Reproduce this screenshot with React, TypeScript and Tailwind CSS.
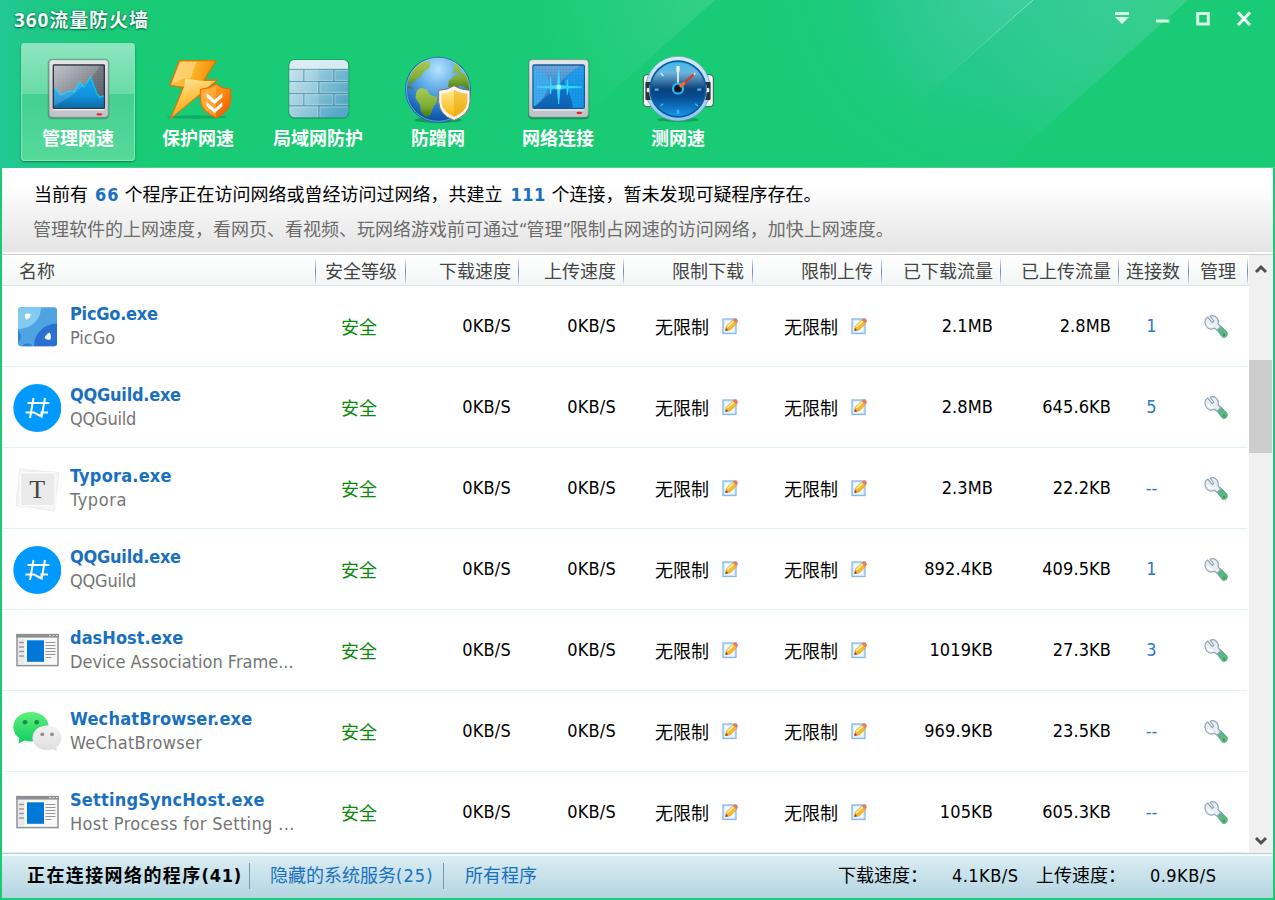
import type { ReactNode } from "react";

function Beams() {
  return (
    <svg className="absolute inset-0" width="1275" height="168" viewBox="0 0 1275 168" aria-hidden="true">
      <defs>
        <linearGradient id="left" x1="0" x2="1" y1="0" y2="0">
          <stop offset="0" stopColor="#22c793" />
          <stop offset="1" stopColor="#18cb74" stopOpacity="0" />
        </linearGradient>
        <radialGradient id="b1" gradientUnits="userSpaceOnUse" cx="715" cy="-10" r="190">
          <stop offset="0" stopColor="#fff" stopOpacity="0.12" />
          <stop offset="1" stopColor="#fff" stopOpacity="0" />
        </radialGradient>
        <radialGradient id="b2" gradientUnits="userSpaceOnUse" cx="1033" cy="-10" r="170">
          <stop offset="0" stopColor="#8be0c8" stopOpacity="0.24" />
          <stop offset="1" stopColor="#8be0c8" stopOpacity="0" />
        </radialGradient>
        <radialGradient id="b3" gradientUnits="userSpaceOnUse" cx="1188" cy="-20" r="240">
          <stop offset="0" stopColor="#fff" stopOpacity="0.13" />
          <stop offset="1" stopColor="#fff" stopOpacity="0" />
        </radialGradient>
        <radialGradient id="teal" gradientUnits="userSpaceOnUse" cx="1000" cy="-30" r="250">
          <stop offset="0" stopColor="#2bc898" />
          <stop offset="0.5" stopColor="#25c88e" stopOpacity="0.75" />
          <stop offset="1" stopColor="#1dca7c" stopOpacity="0" />
        </radialGradient>
        <linearGradient id="edge" gradientUnits="userSpaceOnUse" x1="1033" y1="0" x2="900" y2="118">
          <stop offset="0" stopColor="#b4f0da" stopOpacity="0.6" />
          <stop offset="0.7" stopColor="#b4f0da" stopOpacity="0" />
        </linearGradient>
      </defs>
      <rect width="170" height="168" fill="url(#left)" />
      <path d="M400 0H715L527 168H400Z" fill="url(#b1)" />
      <path d="M700 0H1188L1000 168H700Z" fill="url(#teal)" />
      <path d="M700 0H1033L845 168H700Z" fill="url(#b2)" />
      <path d="M1033 0H1188L1000 168H845Z" fill="url(#b3)" />
      <path d="M1033 0L900 118" stroke="url(#edge)" />
    </svg>
  );
}

function Frame({ children, box }: { children: ReactNode; box: string }) {
  return (
    <svg width="84" height="72" viewBox={box} className="block" aria-hidden="true">
      {children}
    </svg>
  );
}

function MonitorIcon() {
  return (
    <Frame box="108 156 252 216">
      <defs>
        <linearGradient id="mf" x1="0" x2="0" y1="0" y2="1">
          <stop offset="0" stopColor="#e3e6ea" />
          <stop offset="1" stopColor="#bfc2c8" />
        </linearGradient>
        <linearGradient id="ms" x1="0" x2="1" y1="0" y2="1">
          <stop offset="0" stopColor="#b3b7c0" />
          <stop offset="0.5" stopColor="#73787f" />
          <stop offset="1" stopColor="#4d545e" />
        </linearGradient>
        <linearGradient id="mw" x1="0" x2="0" y1="0" y2="1">
          <stop offset="0" stopColor="#12a6ea" />
          <stop offset="0.6" stopColor="#1193de" />
          <stop offset="1" stopColor="#0c69a8" />
        </linearGradient>
        <pattern id="mg" width="8" height="8" patternUnits="userSpaceOnUse">
          <path d="M0 0H8M0 0V8" stroke="#fff" strokeOpacity="0.08" strokeWidth="2" />
        </pattern>
      </defs>
      <rect x="143" y="176" width="185" height="182" rx="13" fill="#24553c" opacity="0.35" />
      <rect x="147" y="179" width="178" height="173" rx="10" fill="url(#mf)" stroke="#6f8b80" strokeWidth="2" />
      <rect x="158" y="193" width="157" height="134" rx="4" fill="#2b3440" />
      <rect x="162" y="197" width="149" height="126" fill="url(#ms)" />
      <rect x="162" y="197" width="149" height="126" fill="url(#mg)" />
      <path d="M162 262L182 285L212 272L222 275L240 245L252 262L272 232L290 280L300 292L311 287V323H162Z" fill="url(#mw)" />
      <path d="M162 262L182 285L212 272L222 275L240 245L252 262L272 232L290 280L300 292L311 287" fill="none" stroke="#16bdf2" strokeWidth="4" />
      <path d="M162 197H300Q255 270 162 318Z" fill="#fff" opacity="0.16" />
      <path d="M160 329H313" stroke="#fff" strokeWidth="3" />
      <ellipse cx="298" cy="343" rx="9" ry="3.5" fill="#ee2222" />
    </Frame>
  );
}

function BoltIcon() {
  return (
    <Frame box="468 156 252 216">
      <defs>
        <linearGradient id="bo" x1="0" x2="1" y1="0" y2="0.3">
          <stop offset="0" stopColor="#ffc24c" />
          <stop offset="0.45" stopColor="#ffb52a" />
          <stop offset="1" stopColor="#f48a00" />
        </linearGradient>
        <linearGradient id="bl" x1="0.3" x2="0.7" y1="0" y2="1">
          <stop offset="0" stopColor="#ffe79a" />
          <stop offset="0.5" stopColor="#ffbf3d" />
          <stop offset="1" stopColor="#f79a12" />
        </linearGradient>
        <linearGradient id="sh" x1="0" x2="1" y1="0" y2="1">
          <stop offset="0" stopColor="#ffad33" />
          <stop offset="0.5" stopColor="#ff8a10" />
          <stop offset="1" stopColor="#e94f00" />
        </linearGradient>
      </defs>
      <ellipse cx="590" cy="351" rx="90" ry="5" fill="#0b7040" opacity="0.35" />
      <path d="M538 182H648L612 240H652L512 355L550 262L510 256Z" fill="url(#bo)" stroke="#d97808" strokeWidth="4" strokeLinejoin="round" />
      <path d="M541 186H590L572 235L550 236L514 253Z" fill="#ffd57c" opacity="0.8" />
      <path d="M556 236L612 243H646L516 350L553 262Z" fill="url(#bl)" />
      <path d="M648 252Q665 266 692 268V300Q692 334 648 354Q602 334 601 300V268Q628 266 648 252Z" fill="url(#sh)" stroke="#e06a10" strokeWidth="3" />
      <path d="M648 258V350Q606 331 606 300V272Q630 270 648 258Z" fill="#ffb648" opacity="0.65" />
      <path d="M620 279L644 300L667 279V292L644 312L620 292ZM620 306L644 327L667 306V319L644 339L620 319Z" fill="#fff" />
    </Frame>
  );
}

function WallIcon() {
  return (
    <Frame box="828 156 252 216">
      <defs>
        <linearGradient id="wa" x1="0" x2="1" y1="0" y2="1">
          <stop offset="0" stopColor="#b9dae6" />
          <stop offset="0.5" stopColor="#83bcd3" />
          <stop offset="1" stopColor="#4c9fc0" />
        </linearGradient>
        <linearGradient id="wb" x1="0" x2="1" y1="0" y2="0.5">
          <stop offset="0" stopColor="#bfe0ea" />
          <stop offset="1" stopColor="#57a8c6" />
        </linearGradient>
        <clipPath id="wc">
          <rect x="868" y="180" width="177" height="172" rx="16" />
        </clipPath>
      </defs>
      <rect x="865" y="178" width="183" height="178" rx="18" fill="#177d55" opacity="0.6" />
      <g clipPath="url(#wc)">
        <rect x="868" y="180" width="177" height="172" fill="url(#wa)" />
        <rect x="868" y="180" width="177" height="27" fill="#d8ebf1" />
        <g fill="url(#wb)" stroke="#c0dfea" strokeWidth="1.5">
          <path d="M866 211H908V241H866ZM915 211H998V241H915ZM1005 211H1047V241H1005ZM866 248H953V277H866ZM960 248H1047V277H960ZM866 284H908V313H866ZM915 284H998V313H915ZM1005 284H1047V313H1005ZM866 321H953V354H866ZM960 321H1047V354H960Z" />
        </g>
        <path d="M868 208H1045M868 244.500H1045M868 280.500H1045M868 317H1045M911.500 208V244M1001.500 208V244M956.500 245V280M911.500 281V316M1001.500 281V316M956.500 317V352" stroke="#4d93ad" strokeWidth="3" />
        <path d="M868 180H956V352H868Z" fill="#fff" opacity="0.12" />
      </g>
    </Frame>
  );
}

function GlobeIcon() {
  return (
    <Frame box="48 156 252 216">
      <defs>
        <radialGradient id="gl" cx="0.5" cy="0.18" r="0.85">
          <stop offset="0" stopColor="#b4e4ff" />
          <stop offset="0.4" stopColor="#5ba9e6" />
          <stop offset="0.8" stopColor="#1a66bb" />
          <stop offset="1" stopColor="#0b4a9a" />
        </radialGradient>
        <linearGradient id="gn" x1="0" x2="0" y1="0" y2="1">
          <stop offset="0" stopColor="#a9c95a" />
          <stop offset="0.6" stopColor="#7fae35" />
          <stop offset="1" stopColor="#3f7a10" />
        </linearGradient>
        <linearGradient id="gy" x1="0" x2="0" y1="0" y2="1">
          <stop offset="0" stopColor="#ffe98a" />
          <stop offset="1" stopColor="#f8b510" />
        </linearGradient>
        <clipPath id="gc">
          <circle cx="174" cy="269" r="96" />
        </clipPath>
      </defs>
      <ellipse cx="174" cy="360" rx="70" ry="9" fill="#0a6238" opacity="0.45" />
      <circle cx="174" cy="269" r="99" fill="#1b67b4" />
      <g clipPath="url(#gc)">
        <circle cx="174" cy="269" r="96" fill="url(#gl)" />
        <path d="M88 230L98 205L126 186L150 184L148 204L132 214L124 228L108 238L96 252L84 246ZM80 256L94 262L100 266L84 264Z" fill="url(#gn)" />
        <path d="M110 272L122 264L140 268L150 284L172 292L170 308L160 320L152 345L138 352L122 334L120 314L106 294Z" fill="url(#gn)" />
        <path d="M218 180L224 200L216 220L230 216L238 226L224 226L206 244L204 260L222 264L244 256L275 272V230L244 188Z" fill="url(#gn)" />
        <path d="M236 204L246 220L262 222L254 206Z" fill="#70b8ec" />
      </g>
      <circle cx="174" cy="269" r="95" fill="none" stroke="#b9e2fb" strokeOpacity="0.5" strokeWidth="3" />
      <path d="M222 257Q242 270 270 271V305Q268 345 222 361Q178 345 176 305V271Q203 270 222 257Z" fill="#f4f4f2" stroke="#85786a" strokeWidth="3" />
      <path d="M222 270Q242 280 262 281V306Q259 336 222 350Q187 336 184 306V281Q204 280 222 270Z" fill="url(#gy)" />
      <path d="M222 270Q242 280 262 281V306Q259 336 222 350Z" fill="#e69c00" opacity="0.4" />
    </Frame>
  );
}

function PulseIcon() {
  return (
    <Frame box="408 156 252 216">
      <defs>
        <linearGradient id="ps" x1="0" x2="0" y1="0" y2="1">
          <stop offset="0" stopColor="#4c95d5" />
          <stop offset="0.5" stopColor="#1674c8" />
          <stop offset="1" stopColor="#0b61b2" />
        </linearGradient>
        <pattern id="pg" width="9" height="9" patternUnits="userSpaceOnUse">
          <path d="M0 0H9M0 0V9" stroke="#0a4a90" strokeOpacity="0.2" strokeWidth="2" />
        </pattern>
      </defs>
      <rect x="444" y="177" width="184" height="181" rx="13" fill="#145f3d" opacity="0.5" />
      <rect x="447" y="179" width="178" height="172" rx="10" fill="url(#mf)" stroke="#8ba79b" strokeWidth="2" />
      <rect x="457" y="193" width="158" height="134" rx="6" fill="#165a9c" />
      <rect x="461" y="197" width="150" height="126" rx="2" fill="url(#ps)" />
      <path d="M611 200Q540 225 556 262Q574 280 578 323H611ZM461 200Q505 220 508 250Q500 290 465 318H461Z" fill="#18a3f2" opacity="0.8" />
      <path d="M461 197H600Q580 210 560 228Q530 262 467 318H461Z" fill="#fff" opacity="0.18" />
      <rect x="461" y="197" width="150" height="126" fill="url(#pg)" />
      <path d="M470 261Q500 259 510 259L512 232L514 259L532 255L536 208L540 255L560 259L562 240L564 259Q590 260 606 261Q590 263 564 264L562 284L560 264L540 268L536 312L532 268L514 264L512 282L510 264Z" fill="#35dcff" stroke="#35dcff" strokeWidth="2" />
      <circle cx="536" cy="261" r="7" fill="#aef6ff" />
      <path d="M460 330H612" stroke="#f1f3f5" strokeWidth="3" />
      <ellipse cx="598" cy="339" rx="9" ry="3.500" fill="#ee2222" />
    </Frame>
  );
}

function GaugeIcon() {
  return (
    <Frame box="768 156 252 216">
      <defs>
        <linearGradient id="ga" x1="0" x2="0" y1="0" y2="1">
          <stop offset="0" stopColor="#3fb9ee" />
          <stop offset="0.2" stopColor="#6cb4dc" />
          <stop offset="0.5" stopColor="#0b4278" />
          <stop offset="0.65" stopColor="#064d93" />
          <stop offset="1" stopColor="#1794e6" />
        </linearGradient>
        <linearGradient id="gr" x1="0" x2="0" y1="0" y2="1">
          <stop offset="0" stopColor="#d6ebf8" />
          <stop offset="1" stopColor="#8ec6f2" />
        </linearGradient>
      </defs>
      <ellipse cx="894" cy="359" rx="62" ry="7" fill="#0a6238" opacity="0.4" />
      <rect x="790" y="224" width="210" height="96" rx="10" fill="#eef2f3" stroke="#35614b" strokeWidth="3" />
      <rect x="797" y="244" width="194" height="57" rx="6" fill="#2d3338" />
      <circle cx="894" cy="266" r="97" fill="url(#gr)" />
      <circle cx="894" cy="266" r="97" fill="none" stroke="#5f9dc2" strokeWidth="2" />
      <path d="M797 246H812Q803 266 812 300H797ZM991 246H976Q985 266 976 300H991Z" fill="#2d3338" />
      <rect x="800" y="264" width="13" height="13" rx="3" fill="#e9e9e9" />
      <rect x="975" y="264" width="13" height="13" rx="3" fill="#e9e9e9" />
      <circle cx="894" cy="267" r="86" fill="#0b5c9c" />
      <circle cx="894" cy="267" r="81" fill="url(#ga)" />
      <g stroke="#48b4f6" strokeWidth="7">
        <path d="M894 329V341M824 269H836M952 269H964" />
        <path d="M842 318L849 311M946 311L953 318" strokeWidth="4" />
      </g>
      <path d="M842 219L850 228M946 219L938 228" stroke="#cfeefd" strokeWidth="4" />
      <path d="M894 198V215" stroke="#fff" strokeWidth="9" />
      <path d="M894 205V250" stroke="#e8f6ff" strokeWidth="5" />
      <circle cx="894" cy="266" r="15" fill="#0b2540" stroke="#27b2f0" strokeWidth="7" />
      <path d="M894 266L941 224" stroke="#e5371f" strokeWidth="7" />
      <path d="M894 266L914 248" stroke="#ff6a2a" strokeWidth="9" />
      <circle cx="894" cy="266" r="8" fill="#16120f" />
    </Frame>
  );
}

function PicGoIcon() {
  return (
    <svg width="48" height="48" viewBox="0 0 48 48" aria-hidden="true">
      <defs>
        <clipPath id="pc">
          <rect x="5" y="4.300" width="39" height="39" rx="3" />
        </clipPath>
      </defs>
      <g clipPath="url(#pc)">
        <rect x="5" y="4" width="39" height="40" fill="#4ea3e0" />
        <path d="M5 4H28C28 17 18 26 5 26Z" fill="#83caef" />
        <path d="M44 20.500C31 21 21 30 21 44H44Z" fill="#2a70d0" />
        <path d="M5 28C9 31 9 36 5 39ZM9 44C11 39 18 39 20 44Z" fill="#2f80d8" />
        <path d="M12 11Q14.500 9.800 17.800 11Q18 15 13.500 16.500Q11.500 15 12 11Z" fill="#fff" />
        <path d="M31.500 35Q32.500 31.500 37 29.500Q38.500 33 37.500 36.500Q34 37.500 31.500 35Z" fill="#fff" />
      </g>
    </svg>
  );
}

function GuildIcon() {
  return (
    <svg width="48" height="48" viewBox="0 0 48 48" aria-hidden="true">
      <circle cx="24.300" cy="24" r="24" fill="#0099ff" />
      <path d="M14.500 19H36.500M12.500 28.500H21L28.500 32.500V28.500H35M20.500 14L17 34M32 14L28.500 33.500" fill="none" stroke="#fff" strokeWidth="2" />
    </svg>
  );
}

function TyporaIcon() {
  return (
    <svg width="48" height="48" viewBox="0 0 48 48" aria-hidden="true">
      <path d="M7 4L46 8L41 46L3 40Z" fill="#f7f7f7" stroke="#ebebeb" />
      <rect x="6" y="6.500" width="37" height="35.500" rx="2" fill="#fbfbfb" stroke="#ededed" strokeWidth="0.700" />
      <rect x="8.300" y="8.500" width="33" height="31.500" fill="#eaeaea" />
      <text x="24.300" y="32.700" textAnchor="middle" fontFamily="Liberation Serif, serif" fontSize="26" fill="#444">
        T
      </text>
    </svg>
  );
}

function AppWindowIcon() {
  return (
    <svg width="48" height="48" viewBox="0 0 48 48" aria-hidden="true">
      <rect x="4" y="7.600" width="41" height="31" fill="#f7f7f7" stroke="#8f9396" strokeWidth="1.500" />
      <rect x="3.300" y="7" width="42.500" height="3.600" fill="#8b8f92" />
      <path d="M36 8.700H38M39.500 8.700H41.500M43 8.700H44.500" stroke="#e6e6e6" />
      <rect x="5" y="11.500" width="6.500" height="26" fill="#e9e9e9" />
      <path d="M6 15.500H11M6 20H11M6 24.500H11M6 29H11" stroke="#9a9a9a" strokeWidth="1.300" />
      <rect x="14" y="13.300" width="17" height="21.500" fill="#0078d7" />
      <path d="M32.500 15.500H42.500M32.500 18.500H42.500M32.500 21.500H42.500M32.500 24.500H42.500M32.500 27.500H42.500M32.500 30.500H38.500" stroke="#979797" strokeWidth="1.200" />
    </svg>
  );
}

function WechatIcon() {
  return (
    <svg width="48" height="48" viewBox="0 0 48 48" className="overflow-visible" aria-hidden="true">
      <defs>
        <linearGradient id="wg" x1="0" x2="0" y1="0" y2="1">
          <stop offset="0" stopColor="#5df07d" />
          <stop offset="1" stopColor="#13cc62" />
        </linearGradient>
        <linearGradient id="ww" x1="0" x2="0" y1="0" y2="1">
          <stop offset="0" stopColor="#f2f2f2" />
          <stop offset="1" stopColor="#dedede" />
        </linearGradient>
      </defs>
      <path d="M18 4C8 4 0.300 10.500 0.300 19C0.300 23.500 2.500 27.500 6.300 30.300L5.500 35.500L11.500 32.500C13.500 33.200 15.800 33.600 18 33.600C28 33.600 35.700 27.300 35.700 19C35.700 10.500 28 4 18 4Z" fill="url(#wg)" />
      <circle cx="12" cy="14.300" r="2.300" fill="#198c48" />
      <circle cx="23.700" cy="14.300" r="2.300" fill="#198c48" />
      <path d="M34 17.500C26 17.500 19.500 23 19.500 29.800C19.500 36.700 26 42.200 34 42.200C36 42.200 38 41.900 39.700 41.200L44 43.500L43.500 39.300C46.700 37 48.500 33.700 48.500 29.800C48.500 23 42 17.500 34 17.500Z" fill="url(#ww)" />
      <circle cx="29.300" cy="26.300" r="1.900" fill="#8f8f8f" />
      <circle cx="39" cy="26.300" r="1.900" fill="#8f8f8f" />
    </svg>
  );
}

function EditIcon() {
  return (
    <svg width="17" height="18" viewBox="0 0 17 18" className="shrink-0" aria-hidden="true">
      <rect x="1" y="2" width="13" height="14.500" fill="#dcecfc" stroke="#86b8ec" strokeWidth="1.300" />
      <rect x="3" y="4" width="9" height="10.500" fill="#f4faff" />
      <path d="M3.500 13.500L4.300 9L11 2.800L15 6.200L8.300 13Z" fill="#f5b92a" stroke="#d9982f" strokeWidth="0.600" />
      <path d="M5.300 9.800L11.800 3.800" stroke="#fdee9c" strokeWidth="1.800" />
      <path d="M10.800 3L12.800 1.300Q15.500 1.500 16 4.300L14.600 6.300Z" fill="#e27a68" />
      <path d="M3.300 14L4 11L6.300 13.200Z" fill="#8e3d25" />
    </svg>
  );
}

function WrenchIcon() {
  return (
    <svg width="24" height="24" viewBox="0 0 24 24" aria-hidden="true">
      <path d="M12.500 14.500L16.500 10.500L22.800 16.800C24.600 19.500 21.800 23.800 18.500 22.300Z" fill="#5db585" stroke="#4fa97a" strokeWidth="0.800" />
      <path d="M1.200 8.500C0.600 5.500 1.800 3.200 3.600 2L8.300 7.500L9.800 6L6 1.200C8.500 0.200 11.300 0.900 12.900 2.800C14.300 4.600 14.500 6.800 14 8.700L16.700 12L13 15.300L10.500 13.200C8 14.500 5.300 14.200 3.500 12.600C2.200 11.500 1.500 10 1.200 8.500Z" fill="#e8eef3" stroke="#95a6b6" strokeWidth="1.200" strokeLinejoin="round" />
      <path d="M3.800 8.500C4.500 10.500 6.500 11.500 9 11" stroke="#fff" strokeWidth="1.500" fill="none" />
      <circle cx="20" cy="20" r="0.900" fill="#2e8a5b" />
    </svg>
  );
}

const tools = [
  { label: "管理网速", icon: <MonitorIcon />, active: true },
  { label: "保护网速", icon: <BoltIcon /> },
  { label: "局域网防护", icon: <WallIcon /> },
  { label: "防蹭网", icon: <GlobeIcon /> },
  { label: "网络连接", icon: <PulseIcon /> },
  { label: "测网速", icon: <GaugeIcon /> },
];

const columns = [
  { label: "名称", cls: "w-[314px] pl-[17px]" },
  { label: "安全等级", cls: "w-[90px] justify-end pr-[9px]" },
  { label: "下载速度", cls: "w-[113px] justify-end pr-2" },
  { label: "上传速度", cls: "w-[105px] justify-end pr-2" },
  { label: "限制下载", cls: "w-[129px] justify-end pr-[9px]" },
  { label: "限制上传", cls: "w-[129px] justify-end pr-[9px]" },
  { label: "已下载流量", cls: "w-[119px] justify-end pr-2" },
  { label: "已上传流量", cls: "w-[118px] justify-end pr-2" },
  { label: "连接数", cls: "w-[70px] justify-end pr-[9px]" },
  { label: "管理", cls: "w-[59px] justify-end pr-[12px]" },
];

const rows = [
  { icon: <PicGoIcon />, name: "PicGo.exe", nameCls: "tracking-[-0.25px]", desc: "PicGo", descCls: "", down: "2.1MB", up: "2.8MB", conn: "1" },
  { icon: <GuildIcon />, name: "QQGuild.exe", nameCls: "tracking-[-0.25px]", desc: "QQGuild", descCls: "tracking-[-0.2px]", down: "2.8MB", up: "645.6KB", conn: "5" },
  { icon: <TyporaIcon />, name: "Typora.exe", nameCls: "tracking-[0.2px]", desc: "Typora", descCls: "tracking-[0.6px]", down: "2.3MB", up: "22.2KB", conn: "--" },
  { icon: <GuildIcon />, name: "QQGuild.exe", nameCls: "tracking-[-0.25px]", desc: "QQGuild", descCls: "tracking-[-0.2px]", down: "892.4KB", up: "409.5KB", conn: "1" },
  { icon: <AppWindowIcon />, name: "dasHost.exe", nameCls: "tracking-[0.05px]", desc: "Device Association Frame...", descCls: "", down: "1019KB", up: "27.3KB", conn: "3" },
  { icon: <WechatIcon />, name: "WechatBrowser.exe", nameCls: "tracking-[0.2px]", desc: "WeChatBrowser", descCls: "tracking-[0.3px]", down: "969.9KB", up: "23.5KB", conn: "--" },
  { icon: <AppWindowIcon />, name: "SettingSyncHost.exe", nameCls: "tracking-[0.2px]", desc: "Host Process for Setting ...", descCls: "tracking-[0.37px]", down: "105KB", up: "605.3KB", conn: "--" },
];

function Limit() {
  return (
    <div className="flex w-[129px] items-center gap-[13px] pl-[30px]">
      <span className="pt-[3px]">无限制</span>
      <EditIcon />
    </div>
  );
}

export default function App() {
  return (
    <div className="flex h-[900px] w-[1275px] flex-col overflow-hidden bg-[#18cb74] font-['DejaVu_Sans_Condensed','Noto_Sans_CJK_SC',sans-serif] text-[18px] leading-[24px] whitespace-nowrap text-black">
      <header className="relative h-[168px] shrink-0 border-b border-[#4ad793]">
        <Beams />
        <div className="relative flex h-[43px] items-start justify-between pr-[23px] pl-[14px]">
          <h1 className="mt-[8px] font-['Noto_Sans','Noto_Sans_CJK_SC',sans-serif] text-[19px] font-bold tracking-[0.9px] text-[#effff8] [text-shadow:0_1px_2px_#0b6a48,0_0_2px_#0b6a48]">
            360流量防火墙
          </h1>
          <div className="mt-[11px] flex gap-[25px] text-[#d5f6e5]">
            <svg width="16" height="16" viewBox="0 0 16 16" fill="currentColor"><path d="M2 1H16V4H2ZM2 6H16L9 13Z" /></svg>
            <svg width="16" height="16" viewBox="0 0 16 16" fill="currentColor"><path d="M2 8.500H15.500V11.500H2Z" /></svg>
            <svg width="16" height="16" viewBox="0 0 16 16" fill="none" stroke="currentColor" strokeWidth="3"><path d="M2.700 2.500H13.300V13.100H2.700Z" /></svg>
            <svg width="16" height="16" viewBox="0 0 16 16" fill="none" stroke="#f0fff7" strokeWidth="3"><path d="M2 1.500L14 14M14 1.500L2 14" /></svg>
          </div>
        </div>
        <nav className="relative flex gap-[6px] pl-[21px]">
          {tools.map((t) => (
            <button
              key={t.label}
              className={
                t.active
                  ? "flex h-[118px] w-[114px] flex-col items-center rounded-[4px] bg-[linear-gradient(180deg,#8fe6c0_0%,#68dba6_43%,#43d091_43.5%,#56d99b_100%)] pt-[9px] shadow-[0_1px_2px_#0a7a48,inset_0_0_0_1px_#84e5b9]"
                  : "flex h-[118px] w-[114px] flex-col items-center pt-[9px]"
              }
            >
              {t.icon}
              <span className="mt-[3px] font-bold text-white">{t.label}</span>
            </button>
          ))}
        </nav>
      </header>

      <main className="mr-[2px] mb-[2px] ml-[2px] flex min-h-0 flex-1 flex-col bg-white">
        <section className="h-[84px] shrink-0 bg-linear-to-b from-white from-20% to-[#e4e4e4] pt-[15px] pl-[32px]">
          <p>
            当前有<b className="mr-[5px] ml-[7px] tracking-[1px] text-[#1a70c0]">66</b>个程序正在访问网络或曾经访问过网络，共建立
            <b className="mr-[6px] ml-[8px] tracking-[0.4px] text-[#1a70c0]">111</b>个连接，暂未发现可疑程序存在。
          </p>
          <p className="mt-[11px] -ml-px text-[#6b6b6b]">
            管理软件的上网速度，看网页、看视频、玩网络游戏前可通过<span className="-mr-[1px]">“</span>管理<span className="-mr-[1px]">”</span>限制占网速的访问网络，加快上网速度。
          </p>
        </section>

        <div className="mt-[2px] flex min-h-0 flex-1 border-t border-[#cfcfcf]">
          <div className="flex w-[1247px] flex-col">
            <div className="flex h-[31px] shrink-0 items-center border-b border-[#dde3e5] bg-linear-to-b from-white to-[#f3f6f6] text-[#444]">
              {columns.map((c) => (
                <div key={c.label} className={`flex h-full items-center ${c.cls} relative`}>
                  <span className="mt-[3px]">{c.label}</span>
                  <i className="absolute top-[4px] right-0 h-[25px] w-px bg-linear-to-b from-[#dfe5ee] via-[#6f88b5] to-[#dfe5ee]" />
                </div>
              ))}
            </div>
            {rows.map((r, i) => (
              <div key={i} className="flex h-[81px] w-[1245px] shrink-0 items-center border-b border-[#e3f1f8]">
                <div className="flex w-[314px] items-center gap-[9px] pt-[2px] pl-[11px]">
                  {r.icon}
                  <div className="-mt-[2px] flex flex-col">
                    <b className={`text-[#1a70c0] ${r.nameCls}`}>{r.name}</b>
                    <span className={`text-[#757575] ${r.descCls}`}>{r.desc}</span>
                  </div>
                </div>
                <div className="w-[91px] pt-[3px] pl-[25px] text-[#0a8a0a]">安全</div>
                <div className="w-[113px] pr-[9px] text-right tracking-[0.2px]">0KB/S</div>
                <div className="w-[105px] pr-[9px] text-right tracking-[0.2px]">0KB/S</div>
                <Limit />
                <Limit />
                <div className="w-[119px] pr-[9px] text-right tracking-[0.1px]">{r.down}</div>
                <div className="w-[118px] pr-[9px] text-right tracking-[0.1px]">{r.up}</div>
                <div className="w-[70px] pr-[7px] text-center text-[#2b78cc]">{r.conn}</div>
                <div className="w-[57px] pt-[2px] pl-[14px]"><WrenchIcon /></div>
              </div>
            ))}
          </div>
          <div className="flex w-[23px] flex-col items-center bg-[#f0f0f0]">
            <svg width="14" height="10" viewBox="0 0 14 10" className="mt-[9px] shrink-0" fill="none" stroke="#505050" strokeWidth="3"><path d="M2 8L7 3L12 8" /></svg>
            <div className="mt-[86px] h-[93px] w-full shrink-0 bg-[#cdcdcd]" />
            <svg width="14" height="10" viewBox="0 0 14 10" className="mt-auto mb-[7px] shrink-0" fill="none" stroke="#505050" strokeWidth="3"><path d="M2 2L7 7L12 2" /></svg>
          </div>
        </div>

        <footer className="flex h-[45px] shrink-0 items-center border-t border-[#b3cfdb] bg-linear-to-b from-[#dceef4] to-[#b4d5e1] pl-[25px] shadow-[inset_0_2px_0_#f4fafc]">
          <b className="w-[222px] tracking-[1.4px]">正在连接网络的程序<span className="tracking-[0.7px]">(41)</span></b>
          <i className="h-[26px] w-px bg-[#7d96b0]" />
          <span className="w-[193px] pl-[20px] text-[#1a70c0]">隐藏的系统服务<span className="tracking-[1.1px]">(25)</span></span>
          <i className="h-[26px] w-px bg-[#7d96b0]" />
          <span className="w-[394px] pl-[21px] text-[#1a70c0]">所有程序</span>
          <span className="w-[114px]">下载速度：</span>
          <span className="w-[84px] tracking-[0.45px]">4.1KB/S</span>
          <span className="w-[114px]">上传速度：</span>
          <span className="tracking-[0.45px]">0.9KB/S</span>
        </footer>
      </main>
    </div>
  );
}
